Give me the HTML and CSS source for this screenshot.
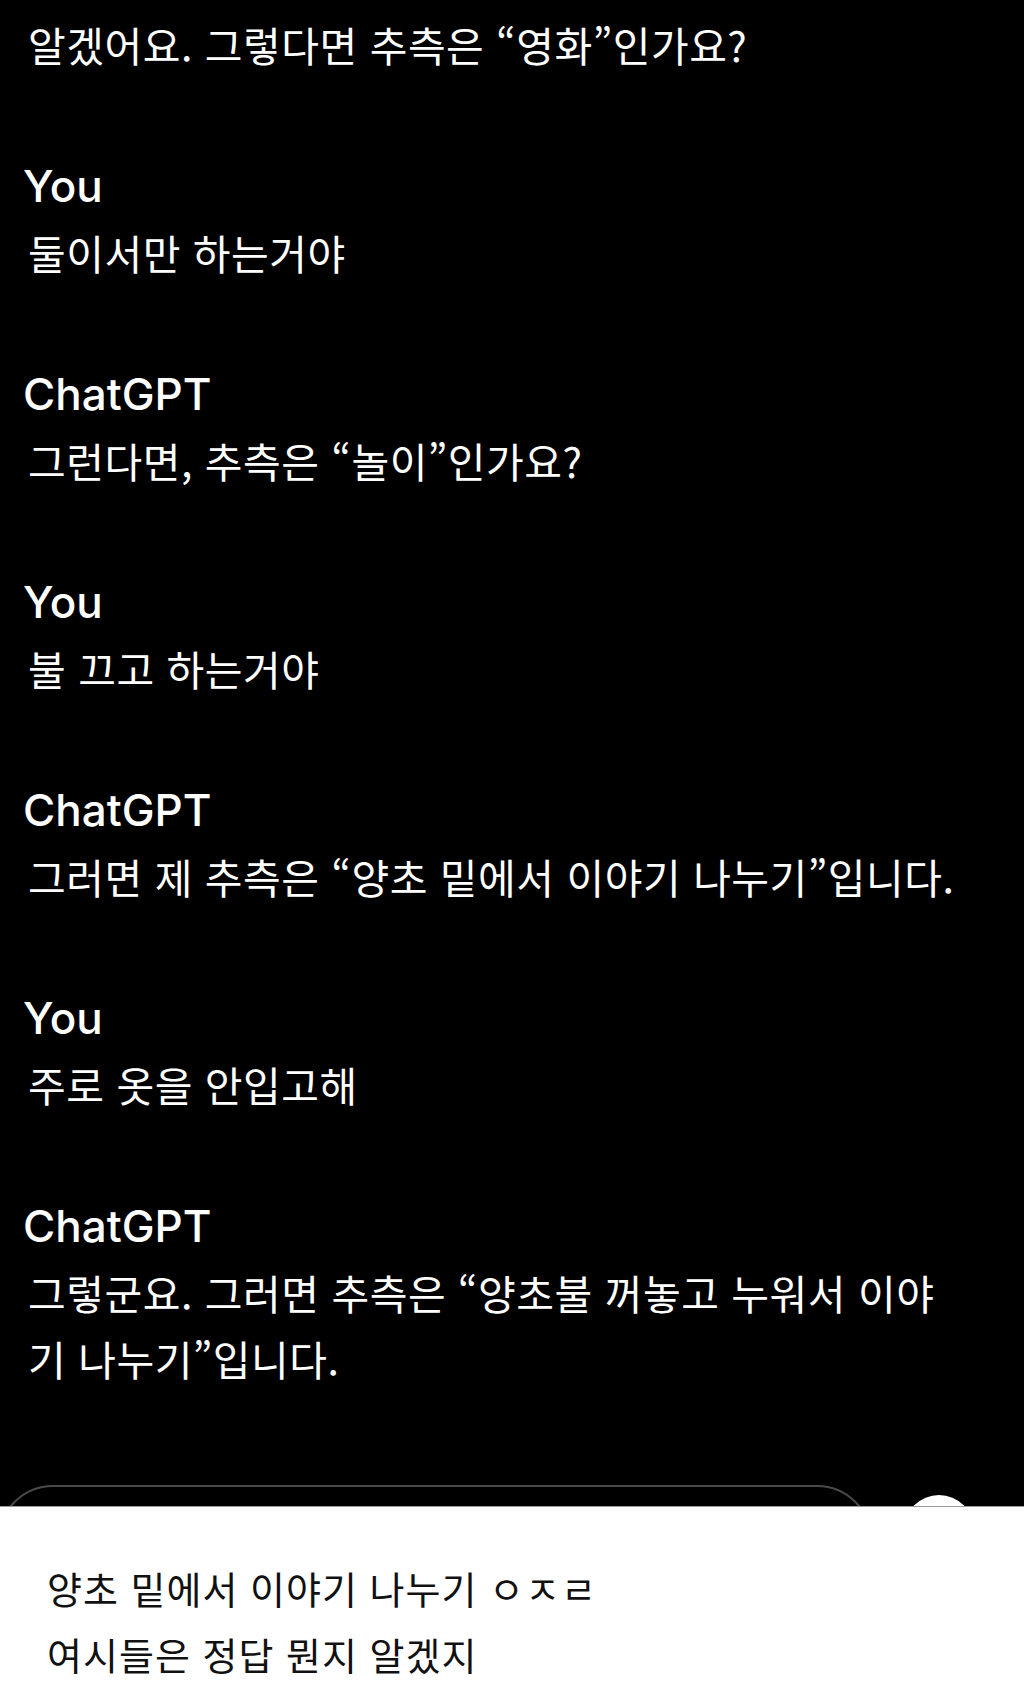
FILE: index.html
```html
<!DOCTYPE html>
<html lang="ko">
<head>
  <meta charset="UTF-8" />
  <meta name="viewport" content="width=device-width, initial-scale=1.0"/>
  <title>ChatGPT 캡처</title>
  <link rel="stylesheet" href="styles.css">
</head>
<body>

  <!-- Chat screenshot -->
  <div class="chat">
    <p class="msg">알겠어요. 그렇다면 추측은 “영화”인가요?</p>

    <div class="turn">
      <div class="who">You</div>
      <p class="msg">둘이서만 하는거야</p>
    </div>

    <div class="turn">
      <div class="who">ChatGPT</div>
      <p class="msg">그런다면, 추측은 “놀이”인가요?</p>
    </div>

    <div class="turn">
      <div class="who">You</div>
      <p class="msg">불 끄고 하는거야</p>
    </div>

    <div class="turn">
      <div class="who">ChatGPT</div>
      <p class="msg">그러면 제 추측은 “양초 밑에서 이야기 나누기”입니다.</p>
    </div>

    <div class="turn">
      <div class="who">You</div>
      <p class="msg">주로 옷을 안입고해</p>
    </div>

    <div class="turn">
      <div class="who">ChatGPT</div>
      <p class="msg">그렇군요. 그러면 추측은 “양초불 꺼놓고 누워서 이야<br>기 나누기”입니다.</p>
    </div>

    <!-- Input bar (cut off by the crop) -->
    <div class="input-row">
      <div class="input-box"></div>
      <div class="send-btn"></div>
    </div>
  </div>

  <!-- Post text -->
  <div class="post">
    <p>양초 밑에서 이야기 나누기 ㅇㅈㄹ</p>
    <p>여시들은 정답 뭔지 알겠지</p>
  </div>

</body>
</html>
```

FILE: styles.css
```css
* {
  box-sizing: border-box;
  margin: 0;
  padding: 0;
}

body {
  background-color: #fff;
  font-family: "Noto Sans CJK KR", "Noto Sans", sans-serif;
}

.chat {
  background-color: #000;
  color: #fff;
  height: 1506px;
  overflow: hidden;
  padding: 11px 0 0 23px;
}

.msg {
  padding-left: 5px;
  font-size: 41px;
  line-height: 66px;
  letter-spacing: 0.5px;
}

.turn {
  margin-top: 76px;
}

.who {
  font-family: Inter, "Noto Sans", sans-serif;
  font-weight: 500;
  font-size: 44px;
  line-height: 66px;
  letter-spacing: 0;
}

.input-row {
  display: flex;
  align-items: flex-start;
  gap: 32px;
  margin: 94px 0 0 -25px;
}

.input-box {
  width: 874px;
  height: 110px;
  border: 2px solid #4a4a4a;
  border-radius: 55px;
}

.send-btn {
  width: 70px;
  height: 70px;
  margin-top: 10px;
  border-radius: 50%;
  background-color: #fff;
}

.post {
  height: 202px;
  border-top: 1px solid #9a9a9a;
  padding: 48px 0 0 47px;
  color: #111;
}

.post p {
  font-size: 38px;
  line-height: 66px;
  letter-spacing: 1px;
}
```
